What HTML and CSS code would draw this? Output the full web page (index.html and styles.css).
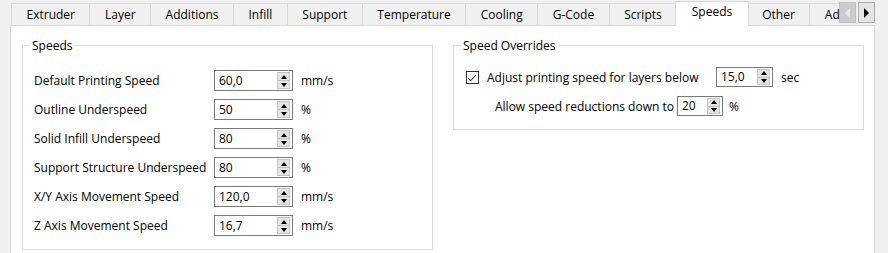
FILE: index.html
```html
<!DOCTYPE html>
<html lang="en">
 <head>
  <meta charset="UTF-8">
  <title>Printer Settings - Speeds</title>
  <link rel="stylesheet" href="styles.css">
 </head>
 <body>
  <div class="tabs">
   <div class="tab-strip">
    <div class="tab">Extruder</div>
    <div class="tab">Layer</div>
    <div class="tab">Additions</div>
    <div class="tab">Infill</div>
    <div class="tab">Support</div>
    <div class="tab">Temperature</div>
    <div class="tab">Cooling</div>
    <div class="tab">G-Code</div>
    <div class="tab">Scripts</div>
    <div class="tab active">Speeds</div>
    <div class="tab">Other</div>
    <div class="tab">Advanced</div>
   </div>
   <div class="tab-scroll">
    <span class="scroll-btn disabled"><span class="arrow-left"></span></span>
    <span class="scroll-btn"><span class="arrow-right"></span></span>
   </div>
  </div>

  <div class="pane">
   <fieldset class="group">
    <legend>Speeds</legend>
    <div class="rows">
     <div class="row">
      <span class="label">Default Printing Speed</span>
      <div class="spin"><span class="spin-value">60,0</span><span class="spin-btns"><span class="up"></span><span class="down"></span></span></div>
      <span class="unit">mm/s</span>
     </div>
     <div class="row">
      <span class="label">Outline Underspeed</span>
      <div class="spin"><span class="spin-value">50</span><span class="spin-btns"><span class="up"></span><span class="down"></span></span></div>
      <span class="unit">%</span>
     </div>
     <div class="row">
      <span class="label">Solid Infill Underspeed</span>
      <div class="spin"><span class="spin-value">80</span><span class="spin-btns"><span class="up"></span><span class="down"></span></span></div>
      <span class="unit">%</span>
     </div>
     <div class="row">
      <span class="label">Support Structure Underspeed</span>
      <div class="spin"><span class="spin-value">80</span><span class="spin-btns"><span class="up"></span><span class="down"></span></span></div>
      <span class="unit">%</span>
     </div>
     <div class="row">
      <span class="label">X/Y Axis Movement Speed</span>
      <div class="spin"><span class="spin-value">120,0</span><span class="spin-btns"><span class="up"></span><span class="down"></span></span></div>
      <span class="unit">mm/s</span>
     </div>
     <div class="row">
      <span class="label">Z Axis Movement Speed</span>
      <div class="spin"><span class="spin-value">16,7</span><span class="spin-btns"><span class="up"></span><span class="down"></span></span></div>
      <span class="unit">mm/s</span>
     </div>
    </div>
   </fieldset>

   <fieldset class="group">
    <legend>Speed Overrides</legend>
    <div class="rows overrides">
     <div class="row short">
      <span class="checkbox checked"></span>
      <span class="check-label">Adjust printing speed for layers below</span>
      <div class="spin layer-time"><span class="spin-value">15,0</span><span class="spin-btns"><span class="up"></span><span class="down"></span></span></div>
      <span class="unit">sec</span>
     </div>
     <div class="row short indent">
      <span class="reduce-label">Allow speed reductions down to</span>
      <div class="spin min-speed"><span class="spin-value">20</span><span class="spin-btns"><span class="up"></span><span class="down"></span></span></div>
      <span class="unit narrow">%</span>
     </div>
    </div>
   </fieldset>
  </div>
 </body>
</html>
```

FILE: styles.css
```css
body {
  margin: 0;
  background: #f0f0f0;
  font-family: "Open Sans", "Noto Sans", sans-serif;
  font-size: 12px;
  color: #000;
  height: 253px;
  overflow: hidden;
}

/* tab bar */
.tabs {
  position: relative;
  height: 26px;
  margin-bottom: -1px;
  z-index: 1;
}
.tab-strip {
  display: flex;
  align-items: flex-start;
  height: 26px;
  width: 839px;
  padding-left: 11px;
  box-sizing: border-box;
  overflow: hidden;
}
.tab {
  flex: none;
  height: 22px;
  line-height: 21px;
  margin-top: 3px;
  margin-left: -1px;
  padding: 0 14.5px;
  background: #f0f0f0;
  border: 1px solid #d9d9d9;
  border-bottom: none;
  box-sizing: border-box;
  white-space: nowrap;
}
.tab:first-child {
  margin-left: 0;
}
.tab.active {
  position: relative;
  height: 25px;
  margin-top: 1px;
  margin-left: -2px;
  margin-right: -1px;
  padding: 0 15.5px 2px;
  line-height: 20px;
  background: #fff;
  z-index: 1;
}
.tab-scroll {
  position: absolute;
  top: 2px;
  left: 839px;
  display: flex;
  gap: 2px;
}
.scroll-btn {
  display: flex;
  align-items: center;
  justify-content: center;
  width: 17px;
  height: 21px;
  box-sizing: border-box;
  background: #e5e5e5;
  border: 1px solid #adadad;
}
.scroll-btn.disabled {
  background: #cccccc;
  border-color: #bfbfbf;
}
.arrow-left,
.arrow-right {
  width: 0;
  height: 0;
  border-top: 5px solid transparent;
  border-bottom: 5px solid transparent;
}
.arrow-left {
  border-right: 5px solid #e8e8e8;
}
.arrow-right {
  border-left: 5px solid #000;
}

/* content pane */
.pane {
  display: grid;
  grid-template-columns: 411px 411px;
  gap: 20px;
  align-items: start;
  margin-left: 10px;
  width: 865px;
  height: 240px;
  padding: 12px 11px 0;
  box-sizing: border-box;
  background: #fff;
  border: 1px solid #d9d9d9;
}
.group {
  margin: 0;
  min-width: 0;
  padding: 0 11px 13px;
  border: 1px solid #dcdcdc;
}
.group legend {
  margin-left: -4px;
  padding: 0 2px;
  line-height: 15px;
}
.rows {
  display: flex;
  flex-direction: column;
  gap: 8px;
  padding-top: 17px;
}
.row {
  display: flex;
  align-items: center;
  height: 21px;
}
.label {
  width: 180px;
  flex: none;
  white-space: nowrap;
}
.unit {
  margin-left: 8px;
}
.unit.narrow {
  margin-left: 6px;
}

/* spin boxes */
.spin {
  display: flex;
  width: 79px;
  height: 21px;
  box-sizing: border-box;
  border: 1px solid #7a7a7a;
  background: #fff;
}
.spin-value {
  flex: 1;
  padding-left: 4px;
  line-height: 19px;
}
.spin-btns {
  display: flex;
  flex-direction: column;
  width: 13px;
  margin: 1px 2px 1px 0;
}
.spin-btns span {
  flex: 1;
  display: flex;
  align-items: center;
  justify-content: center;
  background: #e5e5e5;
  border: 1px solid #c4c4c4;
}
.spin-btns .down {
  border-top: none;
}
.spin-btns .up::after,
.spin-btns .down::after {
  content: "";
  border-left: 3px solid transparent;
  border-right: 3px solid transparent;
}
.spin-btns .up::after {
  border-bottom: 4px solid #000;
}
.spin-btns .down::after {
  border-top: 4px solid #000;
}

/* speed overrides */
.overrides {
  gap: 9px;
  padding-top: 14px;
}
.row.short {
  height: 20px;
}
.row.short .spin {
  height: 20px;
}
.row.short .spin-value {
  line-height: 18px;
}
.indent {
  padding-left: 30px;
}
.checkbox {
  width: 13px;
  height: 13px;
  box-sizing: border-box;
  border: 1px solid #333;
  background: #fff;
  position: relative;
  margin-left: 1px;
}
.checkbox.checked::after {
  content: "";
  position: absolute;
  left: 3px;
  top: 1px;
  width: 3px;
  height: 7px;
  border-right: 1px solid #333;
  border-bottom: 1px solid #333;
  transform: rotate(45deg);
}
.check-label {
  width: 229px;
  margin-left: 8px;
  white-space: nowrap;
}
.reduce-label {
  width: 182px;
  white-space: nowrap;
}
.spin.layer-time {
  width: 57px;
}
.spin.min-speed {
  width: 46px;
}
```
